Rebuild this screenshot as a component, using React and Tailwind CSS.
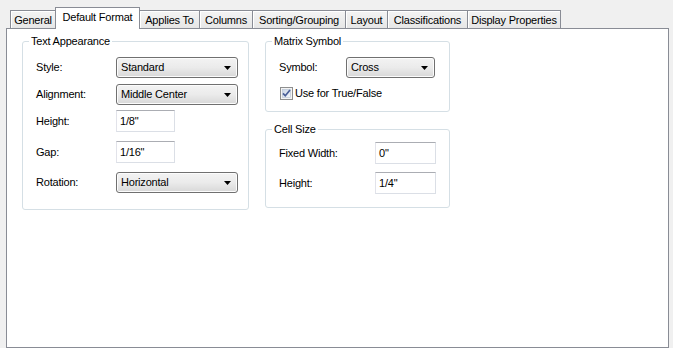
import React from "react";

const font = { fontFamily: '"Liberation Sans", Arial, sans-serif' };

function Tab({ label, w, active }) {
  if (active) {
    return (
      <div
        className={`relative z-10 -ml-px mb-[-1px] flex h-[22px] ${w} items-start justify-center border border-b-0 border-[#898c95] bg-white pt-[3px] text-[11px] leading-[13px] tracking-[-0.2px] text-black`}
      >
        {label}
      </div>
    );
  }
  return (
    <div
      className={`-ml-px flex h-[18px] ${w} items-start justify-center border border-b-0 border-[#898c95] bg-gradient-to-b from-[#f4f4f4] to-[#e6e6e6] pt-[3px] text-[11px] leading-[13px] tracking-[-0.2px] text-black shadow-[inset_1px_1px_0_#ffffff]`}
    >
      {label}
    </div>
  );
}

function Arrow() {
  return (
    <svg width="7" height="4" viewBox="0 0 7 4" className="shrink-0">
      <path d="M0 0 H7 L3.5 4 Z" fill="#000" />
    </svg>
  );
}

function Combo({ value, w }) {
  return (
    <div
      className={`flex h-[21px] ${w} items-center justify-between rounded-[3px] border border-[#707070] bg-gradient-to-b from-[#f3f3f3] via-[#ebebeb] to-[#d8d8d8] pl-[4px] pr-[6px] text-[11px] tracking-[-0.2px] text-black shadow-[inset_0_0_0_1px_#fcfcfc]`}
    >
      <span>{value}</span>
      <Arrow />
    </div>
  );
}

function Field({ value, w }) {
  return (
    <div
      className={`flex h-[22px] ${w} items-center border border-[#dbdfe6] border-t-[#abadb3] border-l-[#e2e3ea] bg-white pl-[3px] text-[11px] tracking-[-0.2px] text-black`}
    >
      {value}
    </div>
  );
}

function Group({ title, className, children }) {
  return (
    <fieldset className={`rounded-[3px] border border-[#d5dfe5] ${className}`}>
      <legend className="ml-[6px] px-[2px] text-[11px] leading-[13px] tracking-[-0.2px] text-black">
        {title}
      </legend>
      {children}
    </fieldset>
  );
}

function Row({ label, labelW, mt, children }) {
  return (
    <div className={`flex items-center ${mt}`}>
      <div className={`${labelW} text-[11px] tracking-[-0.2px] text-black`}>{label}</div>
      {children}
    </div>
  );
}

function Check() {
  return (
    <svg width="13" height="13" viewBox="0 0 13 13" className="shrink-0">
      <defs>
        <linearGradient id="cb" x1="0" y1="0" x2="1" y2="1">
          <stop offset="0" stopColor="#cbd6e6" />
          <stop offset="1" stopColor="#f4f7fb" />
        </linearGradient>
      </defs>
      <rect x="0.5" y="0.5" width="12" height="12" fill="#f4f4f4" stroke="#8e8f8f" />
      <rect x="2.5" y="2.5" width="8" height="8" fill="url(#cb)" stroke="#b5c1d3" strokeWidth="0.6" />
      <path d="M3 6.3 L5.3 8.8 L10 3" fill="none" stroke="#4a5f98" strokeWidth="1.7" />
    </svg>
  );
}

export default function App() {
  return (
    <div className="h-[348px] w-[673px] overflow-hidden bg-[#f0f0f0] pl-[6px] pt-[7px]" style={font}>
      <div className="flex h-[21px] items-end pl-[5px]">
        <Tab label="General" w="w-[46px]" />
        <Tab label="Default Format" w="w-[85px]" active />
        <Tab label="Applies To" w="w-[61px]" />
        <Tab label="Columns" w="w-[54px]" />
        <Tab label="Sorting/Grouping" w="w-[94px]" />
        <Tab label="Layout" w="w-[43px]" />
        <Tab label="Classifications" w="w-[81px]" />
        <Tab label="Display Properties" w="w-[94px]" />
      </div>
      <div className="h-[320px] w-[663px] border border-[#898c95] bg-white">
        <div className="flex items-start pl-[15px] pt-[6px]">
          <Group title="Text Appearance" className="h-[175px] w-[227px]">
            <div className="flex flex-col pl-[13px]">
              <Row label="Style:" labelW="w-[80px]" mt="mt-[9px]">
                <Combo value="Standard" w="w-[122px]" />
              </Row>
              <Row label="Alignment:" labelW="w-[80px]" mt="mt-[6px]">
                <Combo value="Middle Center" w="w-[122px]" />
              </Row>
              <Row label="Height:" labelW="w-[80px]" mt="mt-[5px]">
                <Field value={'1/8"'} w="w-[59px]" />
              </Row>
              <Row label="Gap:" labelW="w-[80px]" mt="mt-[9px]">
                <Field value={'1/16"'} w="w-[59px]" />
              </Row>
              <Row label="Rotation:" labelW="w-[80px]" mt="mt-[9px]">
                <Combo value="Horizontal" w="w-[122px]" />
              </Row>
            </div>
          </Group>
          <div className="ml-[16px] flex flex-col">
            <Group title="Matrix Symbol" className="h-[77px] w-[185px]">
              <div className="flex flex-col pl-[13px]">
                <Row label="Symbol:" labelW="w-[67px]" mt="mt-[9px]">
                  <Combo value="Cross" w="w-[89px]" />
                </Row>
                <div className="mt-[7px] flex h-[16px] items-center gap-[2px] pl-px text-[11px] tracking-[-0.2px] text-black">
                  <Check />
                  <span>Use for True/False</span>
                </div>
              </div>
            </Group>
            <Group title="Cell Size" className="mt-[11px] h-[85px] w-[185px]">
              <div className="flex flex-col pl-[13px]">
                <Row label="Fixed Width:" labelW="w-[96px]" mt="mt-[6px]">
                  <Field value={'0"'} w="w-[61px]" />
                </Row>
                <Row label="Height:" labelW="w-[96px]" mt="mt-[8px]">
                  <Field value={'1/4"'} w="w-[61px]" />
                </Row>
              </div>
            </Group>
          </div>
        </div>
      </div>
    </div>
  );
}
